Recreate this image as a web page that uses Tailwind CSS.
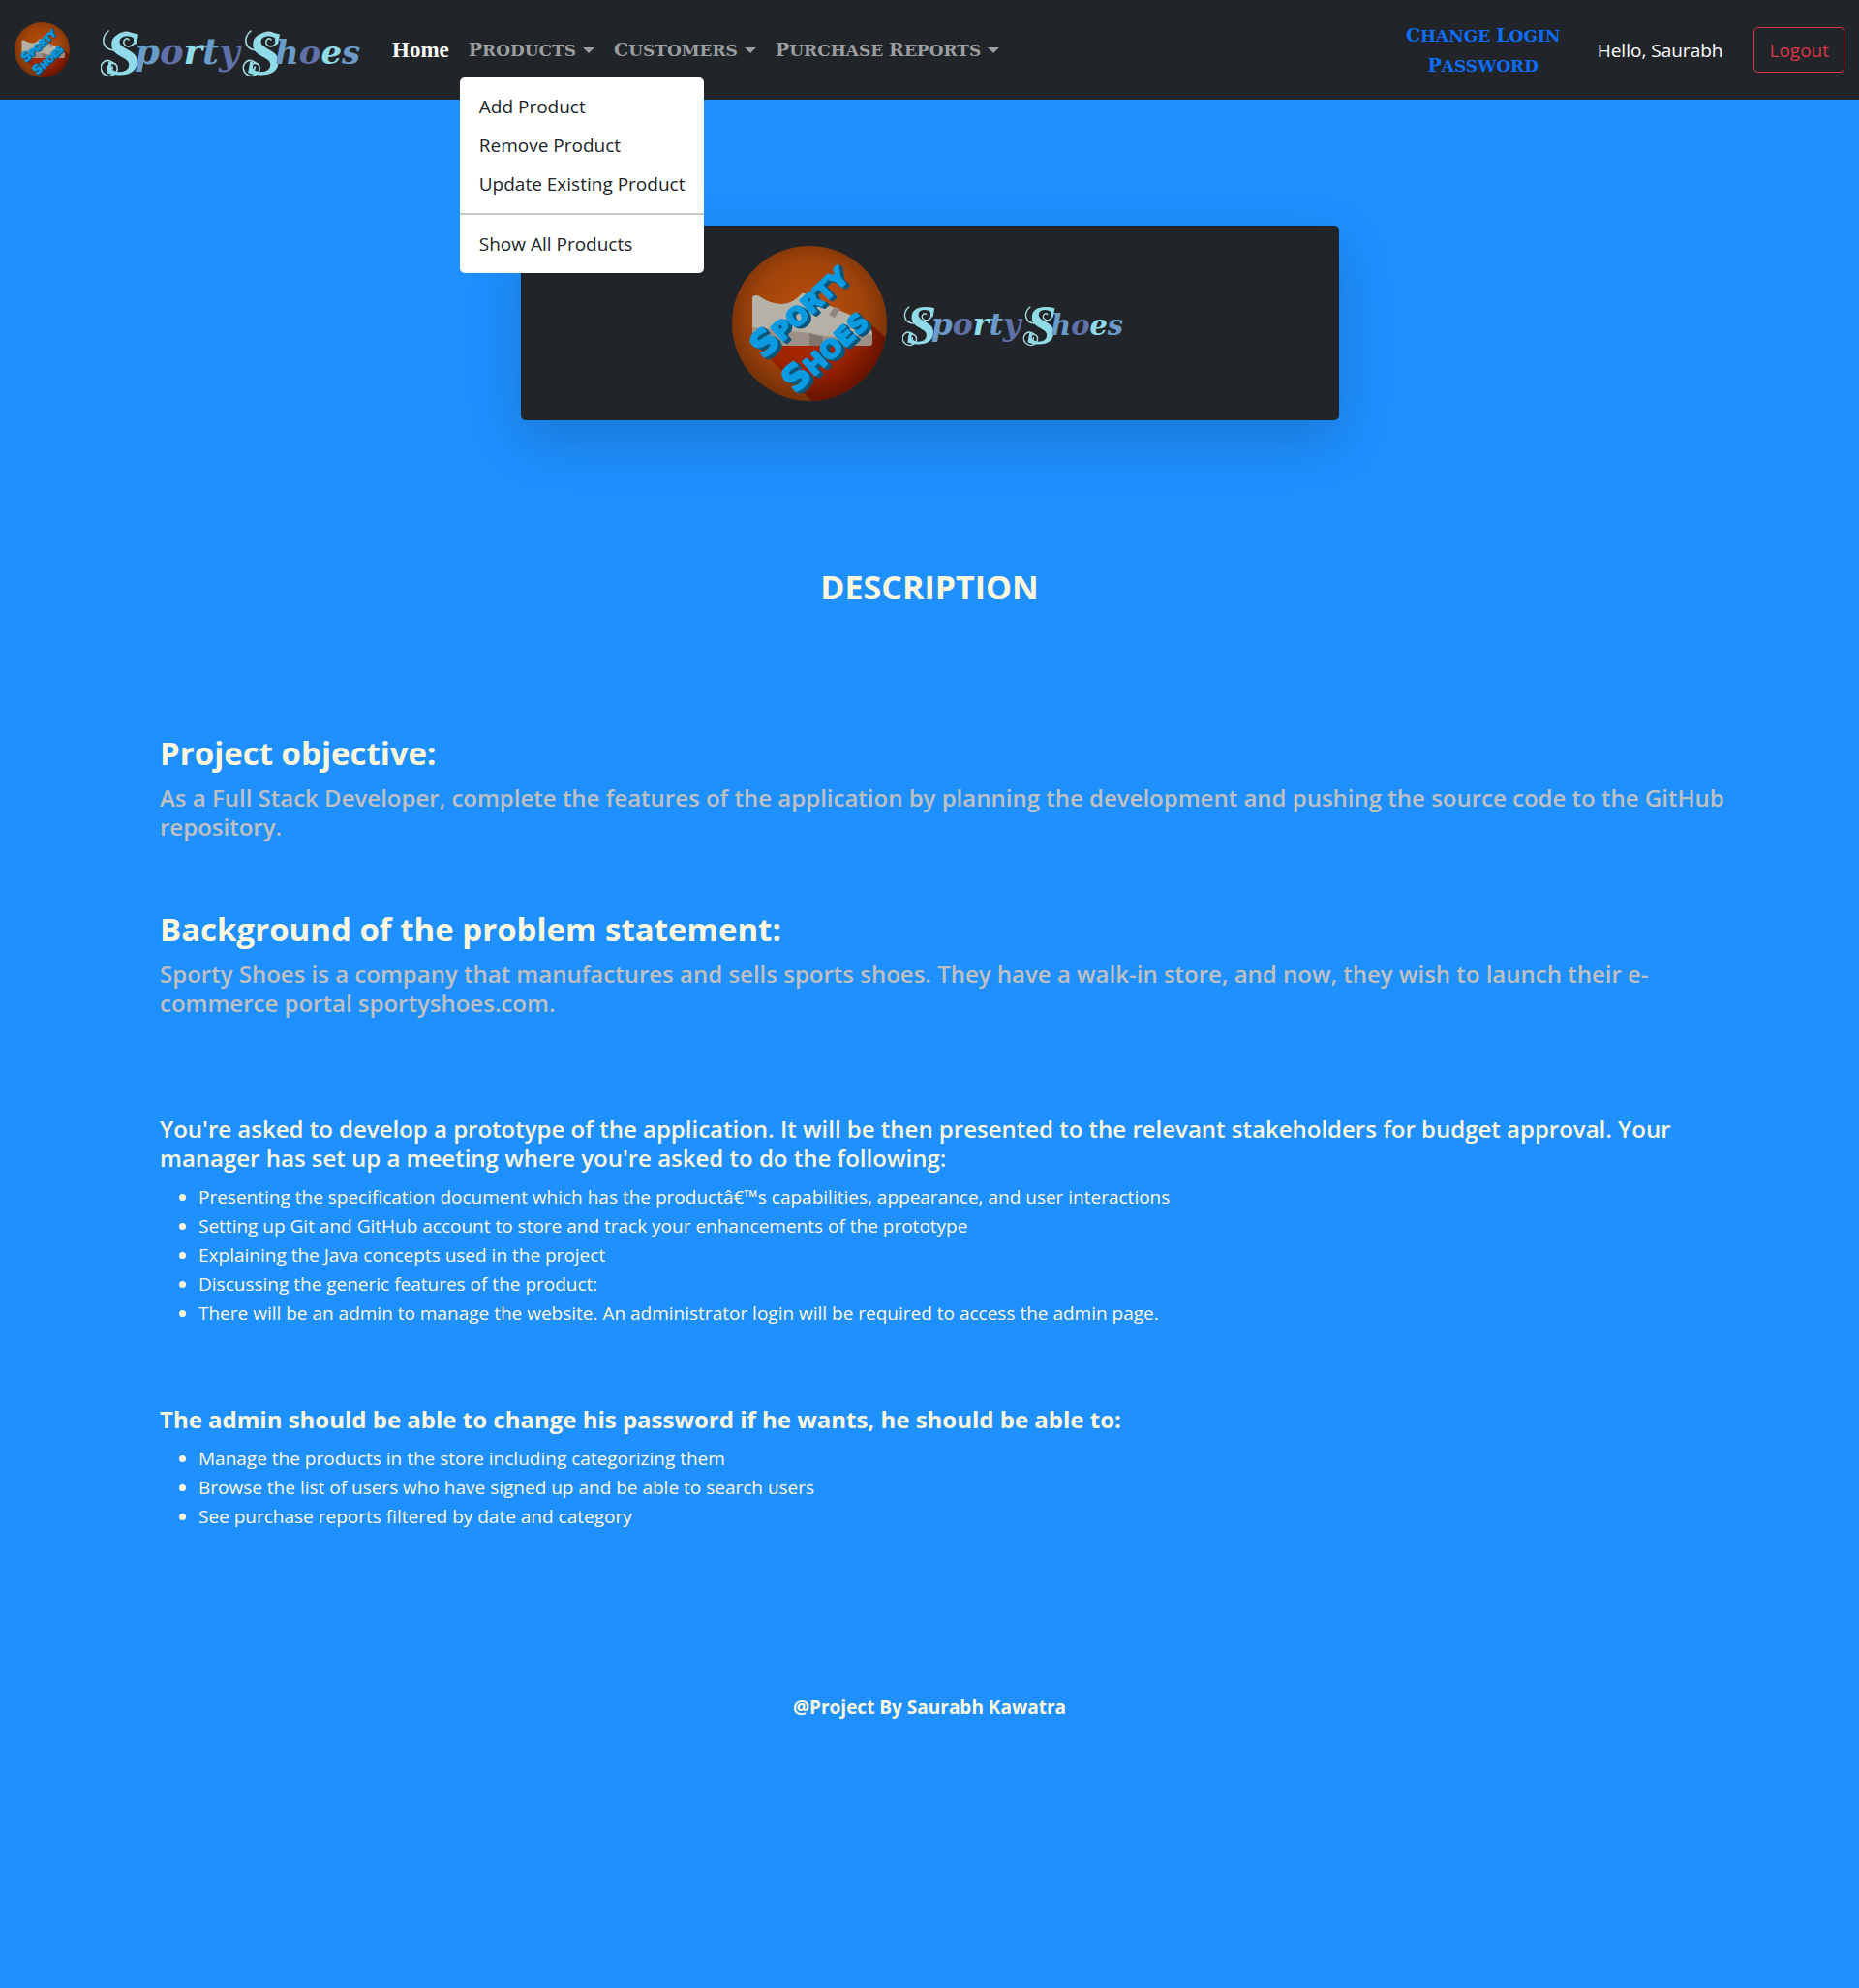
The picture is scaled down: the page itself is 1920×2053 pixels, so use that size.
<!DOCTYPE html>
<html lang="en">
<head>
<meta charset="utf-8">
<meta name="viewport" content="width=device-width, initial-scale=1">
<title>Sporty Shoes Admin</title>
<script src="https://cdn.jsdelivr.net/npm/@tailwindcss/browser@4"></script>
</head>
<body class="min-h-screen bg-[#1e90ff] font-['Open_Sans',sans-serif] text-[19px] leading-[30px] text-[#fff8dc]">

<svg class="absolute size-0" aria-hidden="true">
  <defs>
    <radialGradient id="orange" cx="50%" cy="45%" r="55%">
      <stop offset="0" stop-color="#bd500c"/><stop offset=".65" stop-color="#a0430a"/><stop offset="1" stop-color="#733108"/>
    </radialGradient>
    <radialGradient id="red" gradientUnits="userSpaceOnUse" cx="80" cy="80" r="80">
      <stop offset="0" stop-color="#b02800"/><stop offset=".6" stop-color="#9e2400"/><stop offset="1" stop-color="#661400"/>
    </radialGradient>
    <clipPath id="disc"><circle cx="80" cy="80" r="80"/></clipPath>
    <symbol id="badge" viewBox="0 0 160 160">
      <circle cx="80" cy="80" r="80" fill="url(#orange)"/>
      <path clip-path="url(#disc)" fill="url(#red)" d="M24 101L145 82L165 100V165H87Z"/>
      <path fill="#b5b1a6" d="M21 54q0-3 4-3 3 0 5 2 10 7 22 7 12-1 20-11 3-1 6 2l32 15q20 8 31 16 4 4 4 10v8q0 3-4 3H25q-4 0-4-4z"/>
      <path fill="#9b8f87" d="M21 84l60 6q25 7 64 1v8q0 4-4 4H25q-4 0-4-4z"/>
      <path fill="#81756f" d="M80 90l14 4v9H80z"/>
      <path fill="#8f857d" d="M106 63l6 2-6 9-6-3z"/>
      <g fill="#0a9be2" stroke="#0a9be2" stroke-width="2" stroke-linejoin="round" font-family="'DejaVu Sans',sans-serif" font-weight="700" font-size="26" text-anchor="middle" style="filter:drop-shadow(2px 1px 0 #07567c) drop-shadow(2px 1px 0 #07567c)">
        <text transform="translate(69 67) rotate(-43)" y="12"><tspan font-size="36">S</tspan>PORTY</text>
        <text transform="translate(96 108) rotate(-43)" y="12"><tspan font-size="36">S</tspan>HOES</text>
      </g>
    </symbol>
    <symbol id="wordmark" viewBox="0 0 268 50">
      <g fill="none" stroke="#a9dde2" stroke-width="1.6" stroke-linecap="round">
        <path id="curl" d="M8 1C0 8 1 20 14 21M14 12C17 1 31 -1 35 8C37 16 27 20 24 14C23 10 27 7 29 10M13 34C4 27 -3 37 2 44C8 51 18 46 17 38C15 32 7 34 8 40C10 42 13 40 12 38"/>
        <use href="#curl" x="147"/>
      </g>
      <text font-family="'DejaVu Serif',serif" font-weight="700" font-style="italic" font-size="37" y="35"><tspan font-family="'Liberation Serif',serif" font-size="66" x="5" y="46" fill="#8fdbe8">S</tspan><tspan x="35" y="35" fill="#6a9bc9">p</tspan><tspan fill="#6070a8">o</tspan><tspan fill="#8fdbe8">r</tspan><tspan fill="#6a9bc9">t</tspan><tspan fill="#6070a8">y</tspan><tspan font-family="'Liberation Serif',serif" font-size="66" x="151" y="46" fill="#8fdbe8">S</tspan><tspan x="180" y="35" font-size="34" fill="#6a9bc9">h</tspan><tspan font-size="34" fill="#6070a8">o</tspan><tspan font-size="34" fill="#8fdbe8">e</tspan><tspan font-size="34" fill="#6a9bc9">s</tspan></text>
    </symbol>
  </defs>
</svg>

<header class="flex h-[103px] items-center bg-[#212529] px-[15px]">
  <a href="#" class="flex items-center gap-8" aria-label="Sporty Shoes">
    <svg class="size-[57px]"><use href="#badge"/></svg>
    <svg class="mt-2 h-[50px] w-[268px]"><use href="#wordmark"/></svg>
  </a>
  <nav class="ml-[33px] flex items-center gap-5 font-['DejaVu_Serif',serif] text-[17px] font-bold text-[#9b9d9e]">
    <a href="#" class="font-['Liberation_Serif',serif] text-[23px] text-white">Home</a>
    <div class="relative">
      <button type="button" class="flex cursor-pointer items-center gap-[7px] uppercase" aria-expanded="true">
        <span class="block first-letter:text-[19px]">Products</span>
        <svg class="h-[6px] w-3" viewBox="0 0 12 6" fill="currentColor"><path d="M0 0h12L6 6z"/></svg>
      </button>
      <ul class="absolute top-full -left-[9px] z-10 mt-[13px] rounded-[5px] bg-white py-[10px] font-['Open_Sans',sans-serif] text-[19px] font-normal whitespace-nowrap text-[#212529]">
        <li><a href="#" class="block px-5 py-[5px]">Add Product</a></li>
        <li><a href="#" class="block px-5 py-[5px]">Remove Product</a></li>
        <li><a href="#" class="block px-5 py-[5px]">Update Existing Product</a></li>
        <li class="my-[10px] border-t-2 border-[#c8c8c8]" role="separator"></li>
        <li><a href="#" class="block px-5 py-[5px]">Show All Products</a></li>
      </ul>
    </div>
    <button type="button" class="flex cursor-pointer items-center gap-[7px] uppercase">
      <span class="block first-letter:text-[19px]">Customers</span>
      <svg class="h-[6px] w-3" viewBox="0 0 12 6" fill="currentColor"><path d="M0 0h12L6 6z"/></svg>
    </button>
    <button type="button" class="flex cursor-pointer items-center gap-[7px] uppercase">
      <span><span class="inline-block first-letter:text-[19px]">Purchase</span> <span class="inline-block first-letter:text-[19px]">Reports</span></span>
      <svg class="h-[6px] w-3" viewBox="0 0 12 6" fill="currentColor"><path d="M0 0h12L6 6z"/></svg>
    </button>
  </nav>
  <div class="ml-auto flex items-center">
    <a href="#" class="mr-[34px] w-[168px] text-center font-['DejaVu_Serif',serif] text-[17px] font-bold text-[#0d6efd] uppercase"><span class="inline-block first-letter:text-[19px]">Change</span> <span class="inline-block first-letter:text-[19px]">Login</span> <span class="inline-block first-letter:text-[19px]">Password</span></a>
    <span class="mr-8 text-white">Hello, Saurabh</span>
    <button type="button" class="h-[47px] cursor-pointer rounded-[5px] border border-[#dc3545] px-[15px] text-[#dc3545]">Logout</button>
  </div>
</header>

<main>
  <section class="mx-auto mt-[130px] flex h-[201px] w-[845px] max-w-full items-center justify-center gap-4 rounded-[5px] bg-[#212529] pr-1 shadow-[0_20px_60px_rgba(0,0,0,0.175)]">
    <svg class="size-40"><use href="#badge"/></svg>
    <svg class="mt-2 h-[43px] w-[228px]" role="img" aria-label="Sporty Shoes"><use href="#wordmark"/></svg>
  </section>

  <h2 class="mt-[151px] text-center text-[34px] leading-[42px] font-bold">DESCRIPTION</h2>

  <div class="pr-[130px] pl-[165px]">
    <section class="mt-[130px]">
      <h3 class="text-[33px] leading-[42px] font-bold">Project objective:</h3>
      <p class="mt-[10px] text-[24px] font-semibold text-[#c0c0c0]">As a Full Stack Developer, complete the features of the application by planning the development and pushing the source code to the GitHub repository.</p>
    </section>

    <section class="mt-[70px]">
      <h3 class="text-[33px] leading-[42px] font-bold">Background of the problem statement:</h3>
      <p class="mt-[10px] text-[24px] font-semibold text-[#c0c0c0]">Sporty Shoes is a company that manufactures and sells sports shoes. They have a walk-in store, and now, they wish to launch their e-commerce portal sportyshoes.com.</p>
    </section>

    <section class="mt-[100px]">
      <h4 class="text-[24px] font-semibold">You're asked to develop a prototype of the application. It will be then presented to the relevant stakeholders for budget approval. Your manager has set up a meeting where you're asked to do the following:</h4>
      <ul class="mt-[10px] list-disc pl-10">
        <li>Presenting the specification document which has the productâ€™s capabilities, appearance, and user interactions</li>
        <li>Setting up Git and GitHub account to store and track your enhancements of the prototype</li>
        <li>Explaining the Java concepts used in the project</li>
        <li>Discussing the generic features of the product:</li>
        <li>There will be an admin to manage the website. An administrator login will be required to access the admin page.</li>
      </ul>
    </section>

    <section class="mt-20">
      <h4 class="text-[24px] font-bold">The admin should be able to change his password if he wants, he should be able to:</h4>
      <ul class="mt-[10px] list-disc pl-10">
        <li>Manage the products in the store including categorizing them</li>
        <li>Browse the list of users who have signed up and be able to search users</li>
        <li>See purchase reports filtered by date and category</li>
      </ul>
    </section>
  </div>
</main>

<footer class="pt-[167px] text-center font-bold">@Project By Saurabh Kawatra</footer>
</body>
</html>
